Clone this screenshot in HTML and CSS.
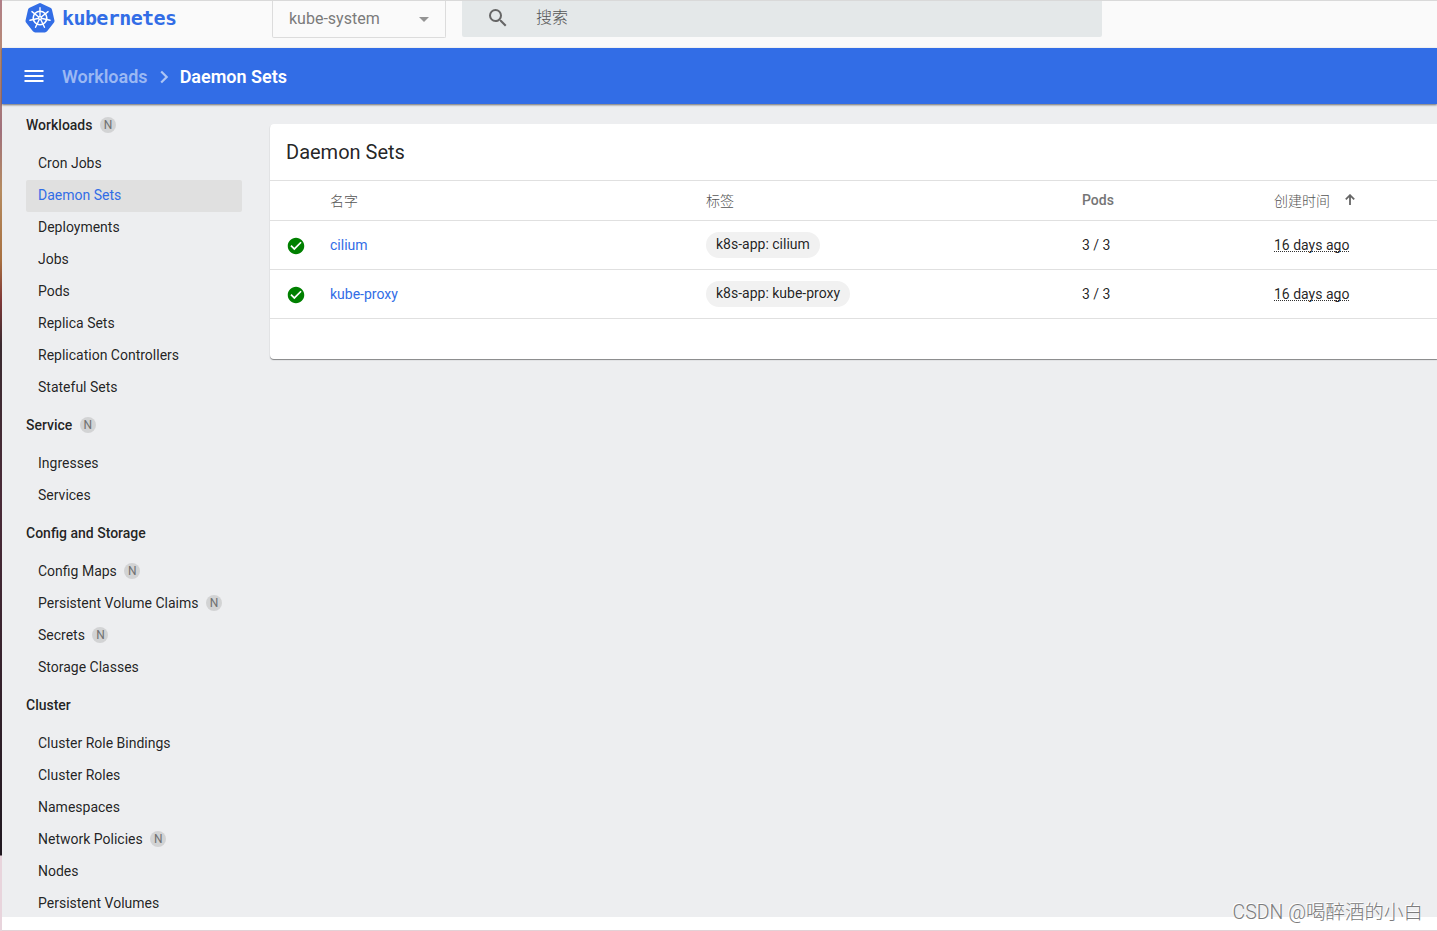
FILE: index.html
```
<!DOCTYPE html>
<html lang="zh">
<head>
  <meta charset="UTF-8">
  <title>Kubernetes Dashboard</title>
  <link rel="stylesheet" href="styles.css">
</head>
<body>

<div class="desktop"></div>

<div class="window">
  <header class="topbar">
    <div class="brand">
      <svg class="logo" width="30" height="30" viewBox="0 0 30 30">
        <path d="M13.7 .4Q15 -.2 16.3 .4L25.4 4.8Q26.7 5.5 27 6.8L29.4 17.2Q29.7 18.6 28.8 19.7L22.1 28.3Q21.2 29.4 19.8 29.4H10.2Q8.8 29.4 7.9 28.3L1.2 19.7Q.3 18.6 .6 17.2L3 6.8Q3.3 5.5 4.6 4.8Z" fill="#326de6"/>
        <g fill="none" stroke="#fff" stroke-linecap="round">
          <circle cx="15" cy="15" r="6.8" stroke-width="1.6"/>
          <g stroke-width="1.4">
            <path d="M15 15V4.700"/>
            <path d="M15 15V4.700" transform="rotate(51.43 15 15)"/>
            <path d="M15 15V4.700" transform="rotate(102.86 15 15)"/>
            <path d="M15 15V4.700" transform="rotate(154.29 15 15)"/>
            <path d="M15 15V4.700" transform="rotate(205.71 15 15)"/>
            <path d="M15 15V4.700" transform="rotate(257.14 15 15)"/>
            <path d="M15 15V4.700" transform="rotate(308.57 15 15)"/>
          </g>
        </g>
        <circle cx="15" cy="15" r="2.1" fill="#fff"/>
        <circle cx="15" cy="15" r=".7" fill="#326de6"/>
      </svg>
      <span class="wordmark">kubernetes</span>
    </div>
    <div class="namespace">
      <span>kube-system</span>
      <svg width="10" height="5" viewBox="0 0 10 5"><path d="M0 0h10L5 5z" fill="#949494"/></svg>
    </div>
    <div class="search">
      <svg width="24" height="24" viewBox="0 0 24 24"><path fill="#666" d="M15.5 14h-.79l-.28-.27A6.47 6.47 0 0 0 16 9.5 6.5 6.5 0 1 0 9.5 16c1.61 0 3.09-.59 4.23-1.57l.27.28v.79l5 4.99L20.49 19l-4.99-5zm-6 0C7.01 14 5 11.99 5 9.5S7.01 5 9.5 5 14 7.01 14 9.5 11.99 14 9.5 14z"/></svg>
      <span>搜索</span>
    </div>
  </header>

  <div class="actionbar">
    <svg class="menu" width="20" height="12" viewBox="0 0 20 12"><path d="M.5 0h19v2H.5zM.5 5h19v2H.5zM.5 10h19v2H.5z" fill="#fff"/></svg>
    <span class="crumb">Workloads</span>
    <svg class="chevron" width="9" height="14" viewBox="0 0 9 14"><path d="M1.200 1.500l5.500 5.500-5.500 5.500" fill="none" stroke="#adc5f5" stroke-width="2.200"/></svg>
    <span class="crumb current">Daemon Sets</span>
  </div>

  <div class="main">
    <nav class="sidebar">
      <div class="group">Workloads <i class="badge">N</i></div>
      <a class="item">Cron Jobs</a>
      <a class="item active">Daemon Sets</a>
      <a class="item">Deployments</a>
      <a class="item">Jobs</a>
      <a class="item">Pods</a>
      <a class="item">Replica Sets</a>
      <a class="item">Replication Controllers</a>
      <a class="item">Stateful Sets</a>
      <div class="group">Service <i class="badge">N</i></div>
      <a class="item">Ingresses</a>
      <a class="item">Services</a>
      <div class="group">Config and Storage</div>
      <a class="item">Config Maps <i class="badge">N</i></a>
      <a class="item">Persistent Volume Claims <i class="badge">N</i></a>
      <a class="item">Secrets <i class="badge">N</i></a>
      <a class="item">Storage Classes</a>
      <div class="group">Cluster</div>
      <a class="item">Cluster Role Bindings</a>
      <a class="item">Cluster Roles</a>
      <a class="item">Namespaces</a>
      <a class="item">Network Policies <i class="badge">N</i></a>
      <a class="item">Nodes</a>
      <a class="item">Persistent Volumes</a>
    </nav>

    <section class="card">
      <h2>Daemon Sets</h2>
      <div class="row head">
        <span></span>
        <span class="cjk">名字</span>
        <span class="cjk">标签</span>
        <span>Pods</span>
        <span class="sort"><span class="cjk">创建时间</span>
          <svg width="10" height="11" viewBox="0 0 10 11"><path d="M5 11V1.4M.8 5.4L5 1.2l4.2 4.2" fill="none" stroke="#666" stroke-width="1.8"/></svg>
        </span>
      </div>
      <div class="row">
        <svg class="status" width="18" height="18" viewBox="0 0 24 24"><path fill="#008000" d="M12 1C5.9 1 1 5.9 1 12s4.9 11 11 11 11-4.900 11-11S18.100 1 12 1zm-2.200 16.500L4.500 12.200l1.600-1.600 3.700 3.700 8.100-8.100 1.600 1.600z"/></svg>
        <a class="name">cilium</a>
        <span><span class="chip">k8s-app: cilium</span></span>
        <span>3 / 3</span>
        <span><span class="age">16 days ago</span></span>
      </div>
      <div class="row">
        <svg class="status" width="18" height="18" viewBox="0 0 24 24"><path fill="#008000" d="M12 1C5.9 1 1 5.9 1 12s4.9 11 11 11 11-4.900 11-11S18.100 1 12 1zm-2.200 16.500L4.500 12.200l1.600-1.600 3.700 3.700 8.100-8.100 1.600 1.600z"/></svg>
        <a class="name">kube-proxy</a>
        <span><span class="chip">k8s-app: kube-proxy</span></span>
        <span>3 / 3</span>
        <span><span class="age">16 days ago</span></span>
      </div>
    </section>
  </div>

  <div class="window-foot"></div>
</div>

<div class="watermark">CSDN @喝醉酒的小白</div>

</body>
</html>
```
FILE: styles.css
```
* {
  box-sizing: border-box;
}

body {
  margin: 0;
  width: 1437px;
  height: 931px;
  display: flex;
  overflow: hidden;
  font-family: Roboto, "Noto Sans CJK SC", sans-serif;
  font-size: 14px;
  color: rgba(0, 0, 0, 0.87);
}

/* wallpaper showing beside the window */
.desktop {
  width: 2px;
  background: linear-gradient(#b07f88 0, #b98b72 57px, #a0707c 130px, #b58b60 190px, #a87040 260px, #803838 300px, #3a2a30 345px, #4a2a38 500px, #201820 855px, #e8d4dc 856px);
}

.window {
  flex: 1;
  display: flex;
  flex-direction: column;
  border-top: 1px solid #d9d9d9;
  border-bottom: 1px solid #e3d1d6;
}

.topbar {
  height: 47px;
  display: flex;
  align-items: flex-start;
  background: #fafafa;
}

.brand {
  width: 270px;
  display: flex;
  padding: 2px 0 0 23px;
}

.wordmark {
  margin-left: 7px;
  font-family: "DejaVu Sans Mono", monospace;
  font-size: 20px;
  font-weight: 700;
  line-height: 31px;
  letter-spacing: -0.6px;
  color: #326de6;
}

.namespace {
  width: 174px;
  height: 37px;
  display: flex;
  align-items: center;
  justify-content: space-between;
  padding: 0 16px;
  border: 1px solid #dcdcdc;
  border-top: none;
  border-radius: 0 0 2px 2px;
  font-size: 16px;
  color: #7b7b7b;
}

.namespace span {
  padding-bottom: 2px;
}

.search {
  width: 640px;
  height: 36px;
  margin-left: 16px;
  padding: 5px 0 0 24px;
  display: flex;
  border-radius: 0 0 2px 2px;
  background: #e4e8e9;
}

.search span {
  margin-left: 26px;
  font-size: 16px;
  line-height: 24px;
  font-weight: 300;
  color: #555;
}

.actionbar {
  height: 56px;
  display: flex;
  align-items: center;
  padding-left: 22px;
  background: #326de6;
  box-shadow: 0 1px 2px rgba(0, 0, 0, 0.55);
  position: relative;
}

.crumb {
  margin-left: 18px;
  padding-top: 2px;
  font-size: 18px;
  font-weight: 600;
  line-height: 24px;
  color: #9bb8f3;
}

.chevron {
  margin: 2px 0 0 12px;
}

.crumb.current {
  margin-left: 11px;
  color: #fff;
}

.main {
  flex: 1;
  min-height: 0;
  display: flex;
  align-items: flex-start;
  overflow: hidden;
  background: #edeef0;
}

.sidebar {
  width: 268px;
  padding: 0 28px 0 24px;
}

.group,
.item {
  display: flex;
  align-items: center;
  padding-bottom: 2px;
}

.group {
  height: 44px;
  font-weight: 500;
}

.item {
  height: 32px;
  padding-left: 12px;
  border-radius: 2px;
}

.item.active {
  background: #e0e0e0;
  color: #326de6;
}

.badge {
  width: 16px;
  height: 16px;
  margin-left: 7.5px;
  border-radius: 50%;
  background: #d2d3d4;
  color: #6f7071;
  font-size: 12px;
  font-style: normal;
  font-weight: 400;
  line-height: 17px;
  text-align: center;
}

.card {
  flex: 1;
  height: 235px;
  margin-top: 20px;
  background: #fff;
  border-radius: 4px 0 0 4px;
  box-shadow: 0 1px 1px rgba(0, 0, 0, 0.45);
}

.card h2 {
  height: 57px;
  margin: 0;
  padding-left: 16px;
  border-bottom: 1px solid #e0e0e0;
  font-size: 20px;
  font-weight: 400;
  line-height: 56px;
}

.row {
  height: 49px;
  display: grid;
  grid-template-columns: 44px 376px 376px 192px 1fr;
  align-items: center;
  padding-left: 16px;
  border-bottom: 1px solid #e0e0e0;
}

.row.head {
  height: 40px;
  padding-bottom: 2px;
  font-weight: 500;
  color: #757575;
}

.cjk {
  font-weight: 300;
  color: #555;
}

.sort {
  display: flex;
  align-items: center;
  gap: 15px;
}

.status {
  margin: 2px 0 0 1px;
}

.name {
  color: #326de6;
}

.chip {
  display: inline-block;
  height: 26px;
  padding: 0 10px;
  border-radius: 13px;
  background: #f1f1f1;
  line-height: 25px;
}

.age {
  display: inline-block;
  height: 16px;
  line-height: 16px;
  background: repeating-linear-gradient(90deg, #333 0 1px, transparent 1px 2px) 0 14px / 100% 1px no-repeat;
}

.window-foot {
  height: 13px;
  background: #fff;
}

/* laid over the bottom corner of the page */
.watermark {
  position: absolute;
  right: 14px;
  bottom: 4px;
  font-size: 19.5px;
  font-weight: 300;
  line-height: 28px;
  color: #7c7c7c;
  text-shadow: -1px -1px 0 #fff;
}
```
